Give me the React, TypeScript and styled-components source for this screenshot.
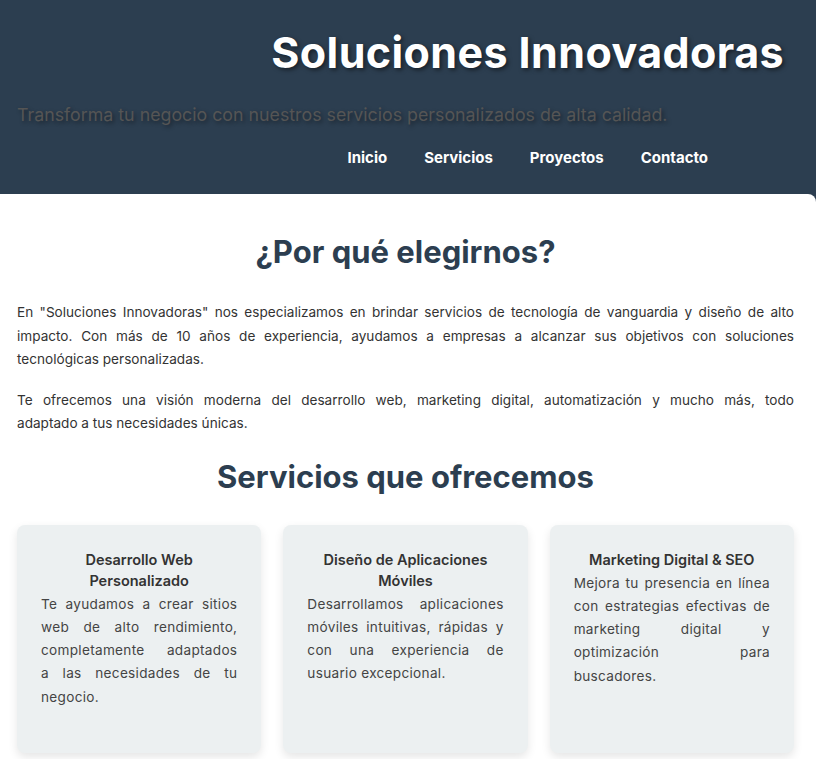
import React from "react";
import styled, { createGlobalStyle } from "styled-components";

const Global = createGlobalStyle`
  html, body { margin: 0; padding: 0; }
  body {
    font-family: Inter, "Open Sans", sans-serif;
    background: #2c3e50;
    color: #333;
  }
`;

const Header = styled.header`
  background: #2c3e50;
  padding: 24px 32px 25px 17px;
  display: flex;
  flex-direction: column;
`;

const Title = styled.h1`
  margin: 0;
  text-align: right;
  color: #fff;
  font-size: 43px;
  font-weight: 700;
  line-height: 56px;
  letter-spacing: 0.4px;
  text-shadow: 2px 2px 4px rgba(0, 0, 0, 0.5);
`;

const Subtitle = styled.p`
  margin: 23px 0 0;
  color: #555;
  font-size: 17.8px;
  line-height: 24px;
  text-shadow: 2px 2px 4px rgba(0, 0, 0, 0.45);
`;

const Nav = styled.nav`
  display: flex;
  justify-content: flex-end;
  gap: 37px;
  margin-top: 20px;
  padding-right: 76px;
`;

const NavLink = styled.a`
  color: #fff;
  font-weight: 700;
  font-size: 15px;
  line-height: 22px;
  text-decoration: none;
`;

const Main = styled.main`
  background: #fff;
  border-top-right-radius: 8px;
  padding: 36px 22px 30px 17px;
`;

const SectionTitle = styled.h2`
  margin: 0;
  text-align: center;
  color: #2c3e50;
  font-size: 31px;
  font-weight: 700;
  line-height: 44px;
`;

const Para = styled.p`
  margin: 0 0 17px;
  font-size: 13.6px;
  line-height: 23.5px;
  text-align: justify;
  color: #333;
`;

const Intro = styled.div`
  margin-top: 27px;
`;

const ServicesTitle = styled(SectionTitle)`
  margin-top: 19px;
`;

const Grid = styled.div`
  display: grid;
  grid-template-columns: repeat(3, 1fr);
  gap: 22px;
  margin-top: 26px;
`;

const Card = styled.div`
  background: #ecf0f1;
  border-radius: 8px;
  padding: 24px 24px 44px;
  box-shadow: 0 4px 10px rgba(0, 0, 0, 0.1);
`;

const CardTitle = styled.h3`
  margin: 0;
  text-align: center;
  font-size: 14.5px;
  font-weight: 600;
  line-height: 21px;
  color: #333;
`;

const CardText = styled.p`
  margin: 2px 0 0;
  font-size: 13.6px;
  line-height: 23.3px;
  text-align: justify;
  color: #444;
  letter-spacing: 0.3px;
`;

const intro = [
  'En "Soluciones Innovadoras" nos especializamos en brindar servicios de tecnología de vanguardia y diseño de alto impacto. Con más de 10 años de experiencia, ayudamos a empresas a alcanzar sus objetivos con soluciones tecnológicas personalizadas.',
  "Te ofrecemos una visión moderna del desarrollo web, marketing digital, automatización y mucho más, todo adaptado\u00a0a\u00a0tus necesidades únicas.",
];

const services = [
  {
    title: "Desarrollo Web Personalizado",
    text: "Te ayudamos a crear sitios web de alto rendimiento, completamente adaptados a\u00a0las necesidades de tu negocio.",
  },
  {
    title: "Diseño de Aplicaciones Móviles",
    text: "Desarrollamos aplicaciones móviles intuitivas, rápidas y con una experiencia de usuario excepcional.",
  },
  {
    title: "Marketing Digital & SEO",
    text: "Mejora tu presencia en línea con estrategias efectivas de marketing digital y optimización para buscadores.",
  },
];

export default function App() {
  return (
    <>
      <Global />
      <Header>
        <Title>Soluciones Innovadoras</Title>
        <Subtitle>Transforma tu negocio con nuestros servicios personalizados de alta calidad.</Subtitle>
        <Nav>
          <NavLink href="#">Inicio</NavLink>
          <NavLink href="#">Servicios</NavLink>
          <NavLink href="#">Proyectos</NavLink>
          <NavLink href="#">Contacto</NavLink>
        </Nav>
      </Header>
      <Main>
        <SectionTitle>¿Por qué elegirnos?</SectionTitle>
        <Intro>
          {intro.map((t) => (
            <Para key={t.slice(0, 12)}>{t}</Para>
          ))}
        </Intro>
        <ServicesTitle>Servicios que ofrecemos</ServicesTitle>
        <Grid>
          {services.map((s) => (
            <Card key={s.title}>
              <CardTitle>{s.title}</CardTitle>
              <CardText>{s.text}</CardText>
            </Card>
          ))}
        </Grid>
      </Main>
    </>
  );
}
